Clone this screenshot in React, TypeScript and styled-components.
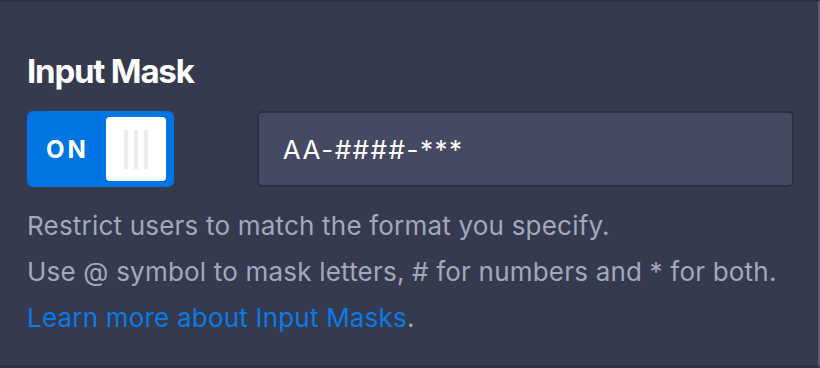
import { FC } from "react";
import styled, { createGlobalStyle } from "styled-components";

const GlobalStyle = createGlobalStyle`
  html, body {
    margin: 0;
    padding: 0;
    background: #353a4e;
  }
  * {
    box-sizing: border-box;
  }
`;

const Panel = styled.section`
  width: 820px;
  height: 368px;
  background: #353a4e;
  border-top: 2px solid #2b2f3e;
  border-right: 2px solid #5b5f71;
  border-bottom: 3px solid #2c303f;
  padding: 49px 24px 0 27px;
  font-family: Inter, "Liberation Sans", sans-serif;
  overflow: hidden;
`;

const Title = styled.h2`
  margin: 0;
  font-size: 33px;
  line-height: 40px;
  font-weight: 700;
  letter-spacing: -1.2px;
  color: #ffffff;
`;

const Row = styled.div`
  display: flex;
  align-items: center;
  gap: 83px;
  margin-top: 20px;
`;

const Toggle = styled.button<{ $on: boolean }>`
  display: flex;
  align-items: center;
  justify-content: space-between;
  width: 147px;
  height: 76px;
  padding: 0 8px 0 19px;
  border: none;
  border-radius: 6px;
  background: ${(p) => (p.$on ? "#0075e3" : "#5b6078")};
  cursor: pointer;
`;

const ToggleLabel = styled.span`
  font-family: Inter, "Liberation Sans", sans-serif;
  font-size: 24px;
  font-weight: 700;
  letter-spacing: 3px;
  color: #ffffff;
`;

const Knob = styled.span`
  display: flex;
  align-items: center;
  justify-content: center;
  gap: 6px;
  width: 60px;
  height: 64px;
  border-radius: 4px;
  background: #ffffff;
`;

const Grip = styled.span`
  width: 4px;
  height: 39px;
  background: #ececec;
`;

const MaskInput = styled.input`
  width: 538px;
  height: 76px;
  padding: 0 24px;
  border: 2px solid #2c303f;
  border-radius: 5px;
  background: #454a62;
  color: #ffffff;
  font-family: Inter, "Liberation Sans", sans-serif;
  font-size: 26px;
  letter-spacing: 1.5px;
  outline: none;
`;

const Help = styled.div`
  margin-top: 16px;
  font-size: 26px;
  line-height: 46px;
  letter-spacing: 0.2px;
  color: #a3a8bd;
`;

const Line = styled.p`
  margin: 0;
  white-space: nowrap;
`;

const HelpLink = styled.a`
  color: #0a7ae8;
  text-decoration: none;
`;

const App: FC = () => {
  return (
    <>
      <GlobalStyle />
      <Panel>
        <Title>Input Mask</Title>
        <Row>
          <Toggle $on type="button">
            <ToggleLabel>ON</ToggleLabel>
            <Knob>
              <Grip />
              <Grip />
              <Grip />
            </Knob>
          </Toggle>
          <MaskInput defaultValue="AA-####-***" />
        </Row>
        <Help>
          <Line>Restrict users to match the format you specify.</Line>
          <Line>Use @ symbol to mask letters, # for numbers and * for both.</Line>
          <Line>
            <HelpLink href="#">Learn more about Input Masks</HelpLink>.
          </Line>
        </Help>
      </Panel>
    </>
  );
};

export default App;
